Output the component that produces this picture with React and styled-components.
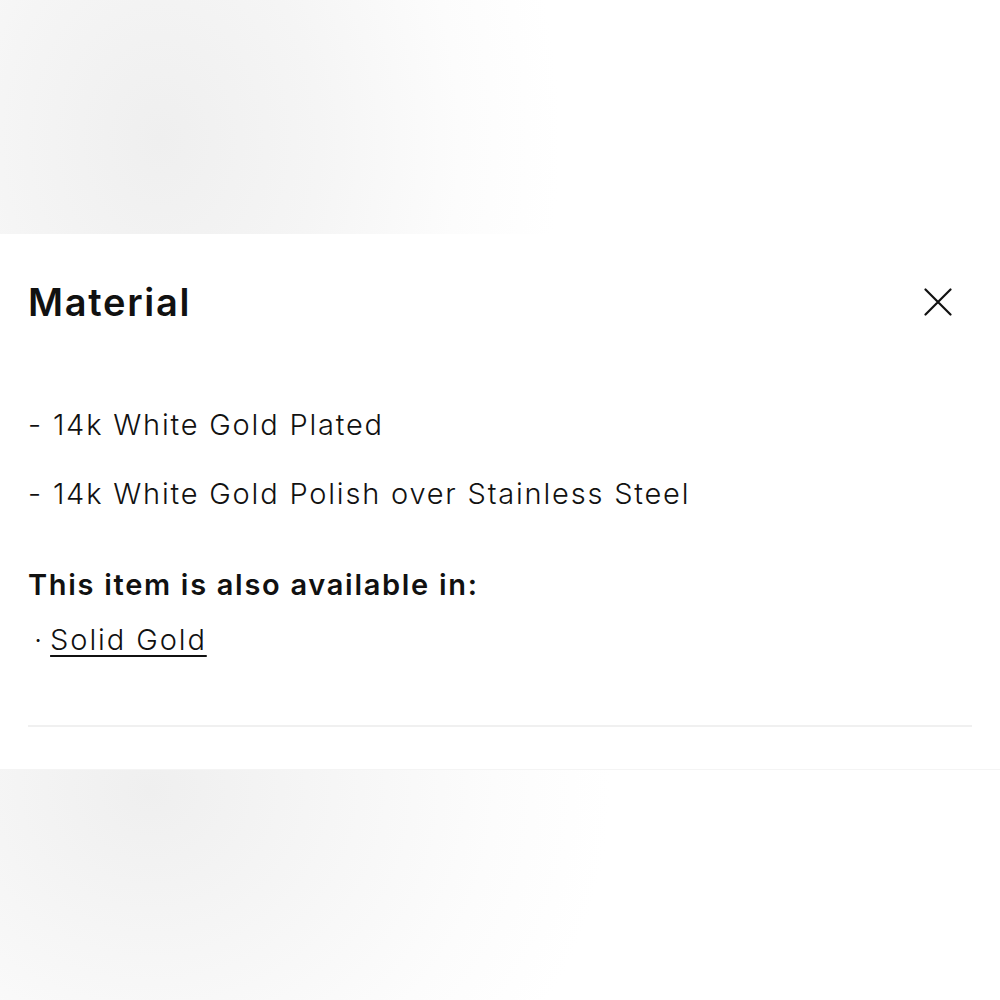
import React from 'react';
import styled, { createGlobalStyle } from 'styled-components';

const GlobalStyle = createGlobalStyle`
  * { box-sizing: border-box; }
  html, body { margin: 0; padding: 0; height: 100%; }
  body {
    font-family: Inter, "Noto Sans", "DejaVu Sans", sans-serif;
    color: #111;
    background: #fff;
  }
  #root { height: 100%; }
`;

const Page = styled.div`
  display: flex;
  flex-direction: column;
  min-height: 1000px;
`;

const TopBackdrop = styled.div`
  height: 234px;
  background: radial-gradient(ellipse 400px 520px at 160px 140px, #efefef 0%, #f5f5f5 40%, #fcfcfc 75%, #fff 100%);
`;

const BottomBackdrop = styled.div`
  flex: 1;
  background: radial-gradient(ellipse 460px 420px at 150px 20px, #efefef 0%, #f6f6f6 40%, #fcfcfc 75%, #fff 100%);
`;

const Panel = styled.section`
  background: #fff;
  padding: 0 28px;
  border-bottom: 1px solid #f4f4f4;
`;

const Header = styled.header`
  height: 136px;
  display: flex;
  align-items: center;
  justify-content: space-between;
`;

const Title = styled.h2`
  margin: 0;
  font-size: 38px;
  font-weight: 600;
  letter-spacing: 1.7px;
  line-height: 1;
`;

const CloseButton = styled.button`
  width: 40px;
  height: 40px;
  margin-right: 14px;
  padding: 0;
  border: none;
  background: transparent;
  display: flex;
  align-items: center;
  justify-content: center;
  cursor: pointer;
  color: #111;
`;

const Details = styled.ul`
  list-style: none;
  margin: 35px 0 0;
  padding: 0;
  display: flex;
  flex-direction: column;
  gap: 29px;
`;

const Detail = styled.li`
  font-size: 29px;
  font-weight: 300;
  line-height: 40px;
  letter-spacing: 1.8px;
`;

const AlsoHeading = styled.h3`
  margin: 51px 0 0;
  font-size: 29px;
  font-weight: 600;
  line-height: 40px;
  letter-spacing: 1.7px;
`;

const Variants = styled.ul`
  list-style: none;
  margin: 15px 0 0;
  padding: 0 0 0 6px;
`;

const Variant = styled.li`
  font-size: 29px;
  font-weight: 300;
  line-height: 40px;
  letter-spacing: 1.9px;

  &::before {
    content: '·';
    margin-right: 6px;
  }
`;

const VariantLink = styled.a`
  color: #111;
  text-decoration: underline;
  text-decoration-thickness: 2px;
  text-underline-offset: 5px;
`;

const Divider = styled.hr`
  margin: 65px 0 0;
  border: none;
  height: 2px;
  background: #f0f0f0;
`;

const Spacer = styled.div`
  height: 42px;
`;

const CloseIcon = () => (
  <svg width="28" height="28" viewBox="0 0 28 28" fill="none">
    <path d="M1.5 1.5 L26.5 26.5 M26.5 1.5 L1.5 26.5" stroke="currentColor" strokeWidth="2.2" strokeLinecap="round" />
  </svg>
);

export default function App() {
  return (
    <Page>
      <GlobalStyle />
      <TopBackdrop />
      <Panel>
        <Header>
          <Title>Material</Title>
          <CloseButton aria-label="Close">
            <CloseIcon />
          </CloseButton>
        </Header>
        <Details>
          <Detail>- 14k White Gold Plated</Detail>
          <Detail>- 14k White Gold Polish over Stainless Steel</Detail>
        </Details>
        <AlsoHeading>This item is also available in:</AlsoHeading>
        <Variants>
          <Variant>
            <VariantLink href="#solid-gold">Solid Gold</VariantLink>
          </Variant>
        </Variants>
        <Divider />
        <Spacer />
      </Panel>
      <BottomBackdrop />
    </Page>
  );
}
